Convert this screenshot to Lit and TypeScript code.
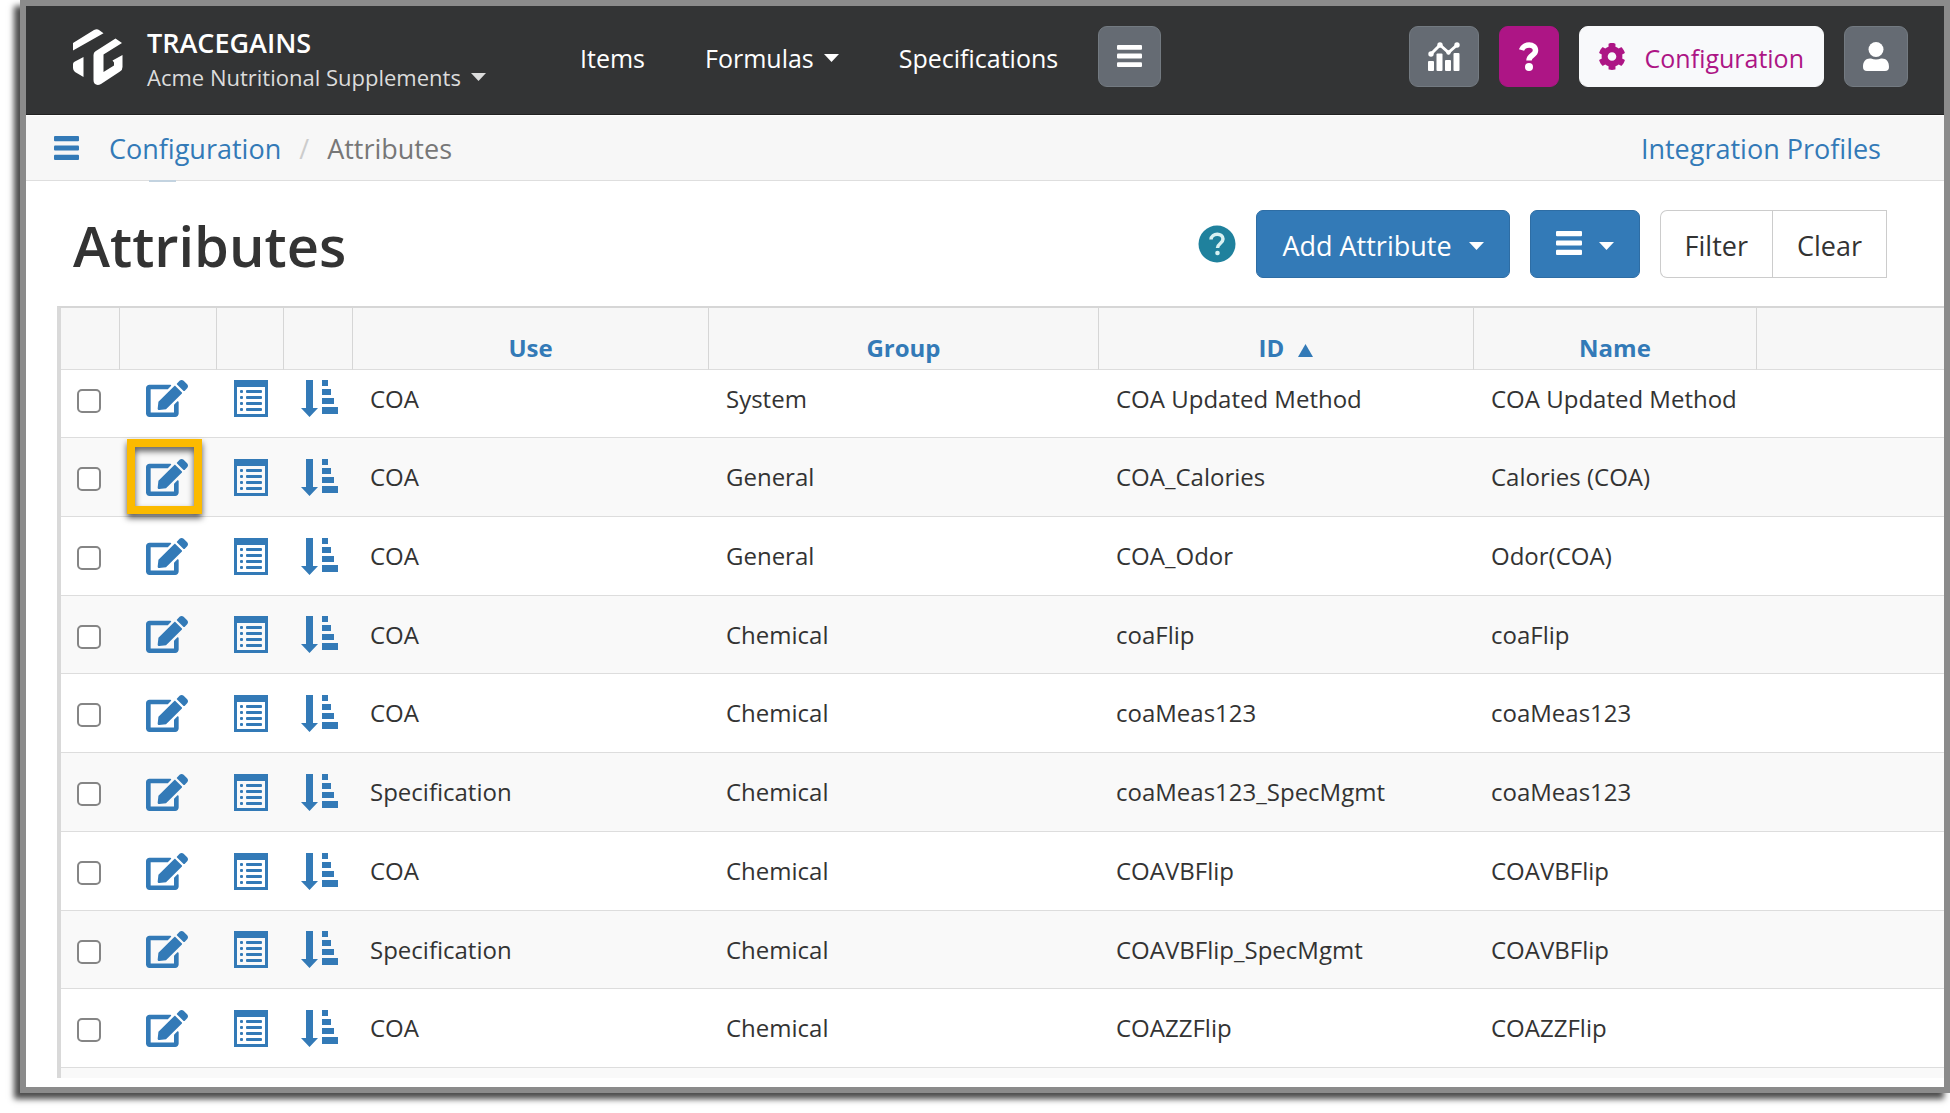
import { LitElement, html, css, svg } from "lit";
import { customElement } from "lit/decorators.js";

interface Attribute {
  use: string;
  group: string;
  id: string;
  name: string;
  highlighted?: boolean;
}

const ATTRIBUTES: Attribute[] = [
  { use: "COA", group: "System", id: "COA Updated Method", name: "COA Updated Method" },
  { use: "COA", group: "General", id: "COA_Calories", name: "Calories (COA)", highlighted: true },
  { use: "COA", group: "General", id: "COA_Odor", name: "Odor(COA)" },
  { use: "COA", group: "Chemical", id: "coaFlip", name: "coaFlip" },
  { use: "COA", group: "Chemical", id: "coaMeas123", name: "coaMeas123" },
  { use: "Specification", group: "Chemical", id: "coaMeas123_SpecMgmt", name: "coaMeas123" },
  { use: "COA", group: "Chemical", id: "COAVBFlip", name: "COAVBFlip" },
  { use: "Specification", group: "Chemical", id: "COAVBFlip_SpecMgmt", name: "COAVBFlip" },
  { use: "COA", group: "Chemical", id: "COAZZFlip", name: "COAZZFlip" },
];

const bars = (width: number, height: number) => html`
  <svg class="bars" width=${width} height=${height} viewBox="0 0 24 23" preserveAspectRatio="none" fill="currentColor" aria-hidden="true">
    <rect x="0" y="0" width="24" height="5" rx="1" />
    <rect x="0" y="9" width="24" height="5" rx="1" />
    <rect x="0" y="18" width="24" height="5" rx="1" />
  </svg>`;

const caret = html`
  <svg class="caret" width="15" height="8" viewBox="0 0 15 8" fill="currentColor" aria-hidden="true">
    <path d="M0 0h15L7.500 8z" />
  </svg>`;

const ascending = html`
  <svg class="ascending" width="15" height="13" viewBox="0 0 15 13" fill="currentColor" aria-hidden="true">
    <path d="M0 13h15L7.500 0z" />
  </svg>`;

const logo = html`
  <svg width="50" height="56" viewBox="0 0 50 56" fill="#fff" aria-hidden="true">
    <path d="M0 21.500V14L21 1Q24-.5 26 1L30.500 4.200z" />
    <path d="M10.500 28V48L2 43Q0 41.500 0 39V35Q0 33.500 1.500 32.800z" />
    <path d="M42.500 9.500 49 14 30.500 25.500V43L41 36.500V33.500L39.500 31.500 49.500 26V38Q49.500 41 47 42.500L28 55Q24 57 21.500 54.500 20.500 53.500 20.500 51V26Q20.500 23.500 22.500 22.200z" />
  </svg>`;

const chartIcon = html`
  <svg width="32" height="29" viewBox="0 0 32 29" fill="currentColor" aria-hidden="true">
    <rect x="0" y="19" width="6" height="10" rx="1" />
    <rect x="8.500" y="11.500" width="6" height="17.500" rx="1" />
    <rect x="17" y="18" width="6" height="11" rx="1" />
    <rect x="25.500" y="11" width="6" height="18" rx="1" />
    <path d="M3 12 12 3 20.500 10.500 29 3" fill="none" stroke="currentColor" stroke-width="3" />
    <circle cx="3" cy="12" r="2.700" /><circle cx="12" cy="3" r="2.700" />
    <circle cx="20.500" cy="10.500" r="2.200" /><circle cx="29" cy="3" r="2.700" />
  </svg>`;

const questionIcon = html`
  <svg width="22" height="29" viewBox="0 0 22 29" aria-hidden="true">
    <path d="M3.500 8C5.500 1.500 17.500 1 17.500 8.500 17.500 13.500 11 13 11 18.500" fill="none" stroke="#fff" stroke-width="5.500" />
    <circle cx="11" cy="25" r="4" fill="#fff" />
  </svg>`;

const gearIcon = html`
  <svg width="26" height="27" viewBox="16 6 480 500" fill="currentColor" aria-hidden="true">
    <path d="M487.400 315.700l-42.600-24.600c4.300-23.200 4.300-47 0-70.200l42.600-24.600c4.900-2.800 7.100-8.600 5.500-14-11.100-35.600-30-67.800-54.700-94.600-3.800-4.100-10-5.100-14.800-2.300L380.800 110c-17.900-15.400-38.500-27.300-60.800-35.100V25.800c0-5.600-3.900-10.500-9.400-11.700-36.700-8.200-74.300-7.800-109.200 0-5.500 1.200-9.400 6.100-9.400 11.700V75c-22.200 7.900-42.800 19.800-60.800 35.100L88.700 85.500c-4.900-2.800-11-1.900-14.800 2.300-24.700 26.700-43.600 58.900-54.700 94.600-1.700 5.400.6 11.200 5.500 14L67.300 221c-4.300 23.200-4.300 47 0 70.200l-42.600 24.600c-4.900 2.800-7.100 8.600-5.500 14 11.100 35.600 30 67.800 54.700 94.600 3.800 4.100 10 5.100 14.800 2.300l42.600-24.600c17.900 15.400 38.500 27.300 60.800 35.100v49.200c0 5.600 3.900 10.500 9.400 11.700 36.700 8.200 74.300 7.800 109.200 0 5.500-1.200 9.400-6.100 9.400-11.700v-49.200c22.200-7.900 42.800-19.800 60.800-35.100l42.600 24.600c4.900 2.800 11 1.900 14.800-2.300 24.700-26.700 43.600-58.900 54.700-94.600 1.500-5.500-.7-11.300-5.600-14.100zM256 336c-44.100 0-80-35.900-80-80s35.900-80 80-80 80 35.900 80 80-35.900 80-80 80z" />
  </svg>`;

const userIcon = html`
  <svg width="26" height="29" viewBox="0 0 26 29" fill="currentColor" aria-hidden="true">
    <circle cx="13" cy="7.500" r="7.500" />
    <path d="M0 25C0 19 3 16 8 16.500Q13 18.500 18 16.500C23 16 26 19 26 25Q26 29 22 29H4Q0 29 0 25z" />
  </svg>`;

const helpIcon = html`
  <svg width="38" height="38" viewBox="0 0 38 38" aria-hidden="true">
    <circle cx="19" cy="19" r="18.500" fill="#1f819d" />
    <path d="M13 14.500C13.500 7.500 25 7.500 25 14 25 18.500 19.500 18.500 19.500 23" fill="none" stroke="#d8f1f2" stroke-width="3.500" />
    <circle cx="19.500" cy="28" r="2.300" fill="#d8f1f2" />
  </svg>`;

const editIcon = html`
  <svg width="42" height="37" viewBox="0 0 576 512" preserveAspectRatio="none" fill="currentColor" aria-hidden="true">
    <path d="M402.600 83.200l90.200 90.200c3.800 3.800 3.800 10 0 13.800L274.400 405.600l-92.800 10.300c-12.400 1.400-22.900-9.100-21.500-21.500l10.300-92.800L388.800 83.200c3.800-3.800 10-3.800 13.800 0zm162-22.900l-48.800-48.800c-15.200-15.200-39.900-15.200-55.200 0l-35.400 35.400c-3.800 3.800-3.800 10 0 13.800l90.200 90.200c3.800 3.800 10 3.800 13.800 0l35.400-35.400c15.200-15.300 15.200-40 0-55.200zM384 346.200V448H64V128h229.800c3.200 0 6.200-1.300 8.500-3.500l40-40c7.600-7.600 2.200-20.500-8.500-20.500H48C21.500 64 0 85.500 0 112v352c0 26.500 21.500 48 48 48h352c26.500 0 48-21.500 48-48V306.200c0-10.700-12.900-16-20.500-8.500l-40 40c-2.200 2.300-3.500 5.300-3.500 8.500z" />
  </svg>`;

const listIcon = html`
  <svg width="34" height="37" viewBox="0 0 34 37" fill="currentColor" aria-hidden="true">
    <path fill-rule="evenodd" d="M0 0H34V37H0zM3 7V34H31V7z" />
    ${[10, 16, 22, 28].map(
      (y) => svg`<rect x="6" y=${y} width="3" height="3" rx="1" /><rect x="12" y=${y} width="16" height="3" rx="1" />`,
    )}
  </svg>`;

const sortIcon = html`
  <svg width="37" height="37" viewBox="0 0 37 37" fill="currentColor" aria-hidden="true">
    <path d="M5 0H12V28H17L8.500 37 0 28H5z" />
    <rect x="21" y="0" width="6" height="6" />
    <rect x="21" y="9" width="9" height="6" />
    <rect x="21" y="18" width="12" height="6" />
    <rect x="21" y="27" width="16" height="7" />
  </svg>`;

@customElement("app-root")
export class AppRoot extends LitElement {
  static styles = css`
    :host {
      display: block;
      box-sizing: border-box;
      height: 100vh;
      padding: 0 0 20px 20px;
      overflow: hidden;
      background: #fff;
      color: #333;
      font-family: "Open Sans", "Liberation Sans", sans-serif;
      font-size: 24px;
    }
    *, *::before, *::after { box-sizing: border-box; }
    svg { display: block; flex: none; }
    a { color: inherit; text-decoration: none; }
    button { font: inherit; color: inherit; margin: 0; cursor: pointer; }

    .frame {
      display: flex;
      flex-direction: column;
      height: 100%;
      border: 6px solid #8b8b8b;
      background: #fff;
      box-shadow: -6px 6px 6px rgba(0, 0, 0, 0.7);
    }

    .topbar {
      display: flex;
      flex: none;
      align-items: flex-start;
      height: 109px;
      padding: 20px 36px 0 47px;
      background: #333435;
      border-bottom: 1px solid #222;
      color: #fff;
      font-size: 25px;
    }
    .brand { display: flex; gap: 24px; padding-top: 3px; width: 507px; }
    .brand-name { font-size: 27px; line-height: 28px; font-weight: 600; }
    .account {
      display: flex;
      align-items: center;
      gap: 10px;
      padding: 0;
      border: 0;
      background: none;
      color: #dcdcdc;
      font-size: 22px;
      line-height: 40px;
      font-weight: 500;
    }
    .nav { display: flex; align-items: center; gap: 60px; height: 64px; }
    .nav a { display: flex; align-items: center; gap: 10px; }
    .tools { display: flex; gap: 20px; margin-left: auto; }
    .tool {
      display: flex;
      align-items: center;
      justify-content: center;
      height: 61px;
      padding: 0 18px;
      border: 1px solid #737a81;
      border-radius: 9px;
      background: #656b73;
      color: #fff;
    }
    .nav .tool { margin: 0 0 4px -20px; }
    .tool.help { border-color: #ad1585; background: #ad1585; }
    .tool.config {
      gap: 20px;
      padding: 0 19px;
      border-color: #f8f9fb;
      background: #f8f9fb;
      color: #ad1585;
    }
    .config span { padding-top: 2px; }

    .crumbs {
      position: relative;
      display: flex;
      flex: none;
      align-items: center;
      height: 66px;
      padding: 0 63px 0 28px;
      border-top: 1px solid #fff;
      border-bottom: 1px solid #dedede;
      background: #f7f7f7;
      color: #337ab7;
      font-size: 27px;
    }
    .crumbs::after {
      content: "";
      position: absolute;
      left: 123px;
      top: 100%;
      width: 27px;
      height: 2px;
      background: #c3d3e0;
    }
    .menu { margin-right: 30px; padding: 0; border: 0; background: none; }
    .sep { padding: 0 18px; color: #ccc; }
    .current { color: #777; }
    .profiles { margin-left: auto; }

    .heading {
      display: flex;
      flex: none;
      align-items: center;
      height: 125px;
      padding: 0 57px 0 47px;
      font-size: 27px;
    }
    h1 { margin: 0 auto 0 0; padding-top: 2px; font-size: 56px; line-height: 64px; font-weight: 600; }
    .heading-help { margin-right: 20px; padding: 0; border: 0; background: none; }
    .btn {
      display: flex;
      align-items: center;
      gap: 17px;
      height: 68px;
      padding: 4px 25px 0;
      border: 1px solid #2e6da4;
      border-radius: 7px;
      background: #337ab7;
      color: #fff;
    }
    .btn .bars { margin-bottom: 6px; }
    .add { margin-right: 20px; }
    .group { display: flex; margin-left: 20px; }
    .btn.plain { padding: 4px 24px 0; border-color: #ccc; background: #fff; color: #333; }
    .btn.filter { border-right: 0; border-radius: 7px 0 0 7px; }
    .btn.clear { border-radius: 0; }

    .grid {
      flex: 1;
      min-height: 0;
      margin: 0 0 9px 31px;
      overflow: hidden;
      border-top: 2px solid #d6d6d6;
      border-left: 4px solid #d9d9d9;
    }
    table { width: 100%; table-layout: fixed; border-collapse: separate; border-spacing: 0; }
    .c-check { width: 59px; }
    .c-edit { width: 97px; }
    .c-list { width: 67px; }
    .c-sort { width: 69px; }
    .c-use { width: 356px; }
    .c-group { width: 390px; }
    .c-id { width: 375px; }
    .c-name { width: 283px; }
    th {
      height: 62px;
      padding: 19px 0 0;
      border-right: 1px solid #d6d6d6;
      border-bottom: 1px solid #ddd;
      background: #f7f7f7;
      color: #337ab7;
      font-size: 24px;
      line-height: 32px;
      font-weight: 700;
    }
    th:last-child { border-right: 0; }
    .ascending { display: inline-block; margin-left: 8px; }
    td {
      height: 79px;
      padding: 0 0 0 17px;
      border-bottom: 1px solid #ddd;
      white-space: nowrap;
      line-height: 32px;
    }
    tbody tr:nth-child(even) td { background: #f9f9f9; }
    tbody tr:nth-child(4n) td { height: 78px; }
    tbody tr:first-child td { height: 68px; padding-bottom: 10px; }
    td .check {
      display: block;
      appearance: none;
      width: 24px;
      height: 24px;
      margin: 4px 0 0 -1px;
      border: 2px solid #858585;
      border-radius: 5px;
      background: #fff;
    }
    .act { position: relative; display: block; padding: 0; border: 0; background: none; color: #337ab7; }
    td.edit { padding-left: 26px; }
    .marked::before {
      content: "";
      position: absolute;
      left: -19px;
      top: -20px;
      width: 75px;
      height: 75px;
      border: 8px solid #fbba00;
      filter: drop-shadow(0 4px 3px rgba(0, 0, 0, 0.65));
    }
  `;

  private row(item: Attribute) {
    return html`
      <tr>
        <td><input class="check" type="checkbox" aria-label="Select ${item.id}" /></td>
        <td class="edit">
          <button class="act ${item.highlighted ? "marked" : ""}" aria-label="Edit ${item.id}">${editIcon}</button>
        </td>
        <td><button class="act" aria-label="Details of ${item.id}">${listIcon}</button></td>
        <td><button class="act" aria-label="Sort order of ${item.id}">${sortIcon}</button></td>
        <td>${item.use}</td>
        <td>${item.group}</td>
        <td>${item.id}</td>
        <td>${item.name}</td>
        <td></td>
      </tr>`;
  }

  render() {
    return html`
      <div class="frame">
        <header class="topbar">
          <div class="brand">
            ${logo}
            <div>
              <div class="brand-name">TRACEGAINS</div>
              <button class="account">Acme Nutritional Supplements ${caret}</button>
            </div>
          </div>
          <nav class="nav">
            <a href="#items">Items</a>
            <a href="#formulas">Formulas ${caret}</a>
            <a href="#specifications">Specifications</a>
            <button class="tool" aria-label="More">${bars(25, 22)}</button>
          </nav>
          <div class="tools">
            <button class="tool" aria-label="Reports">${chartIcon}</button>
            <button class="tool help" aria-label="Help">${questionIcon}</button>
            <button class="tool config">${gearIcon}<span>Configuration</span></button>
            <button class="tool" aria-label="Profile">${userIcon}</button>
          </div>
        </header>
        <nav class="crumbs">
          <button class="menu" aria-label="Menu">${bars(25, 24)}</button>
          <a href="#configuration">Configuration</a>
          <span class="sep">/</span>
          <span class="current">Attributes</span>
          <a class="profiles" href="#profiles">Integration Profiles</a>
        </nav>
        <div class="heading">
          <h1>Attributes</h1>
          <button class="heading-help" aria-label="Help">${helpIcon}</button>
          <button class="btn add">Add Attribute ${caret}</button>
          <button class="btn" aria-label="List options">${bars(26, 24)}${caret}</button>
          <div class="group">
            <button class="btn plain filter">Filter</button>
            <button class="btn plain clear">Clear</button>
          </div>
        </div>
        <main class="grid">
          <table>
            <colgroup>
              <col class="c-check" /><col class="c-edit" /><col class="c-list" /><col class="c-sort" />
              <col class="c-use" /><col class="c-group" /><col class="c-id" /><col class="c-name" /><col />
            </colgroup>
            <thead>
              <tr>
                <th></th><th></th><th></th><th></th>
                <th><a href="#use">Use</a></th>
                <th><a href="#group">Group</a></th>
                <th><a href="#id">ID${ascending}</a></th>
                <th><a href="#name">Name</a></th>
                <th></th>
              </tr>
            </thead>
            <tbody>
              ${ATTRIBUTES.map((item) => this.row(item))}
              <tr><td colspan="9"></td></tr>
            </tbody>
          </table>
        </main>
      </div>`;
  }
}
